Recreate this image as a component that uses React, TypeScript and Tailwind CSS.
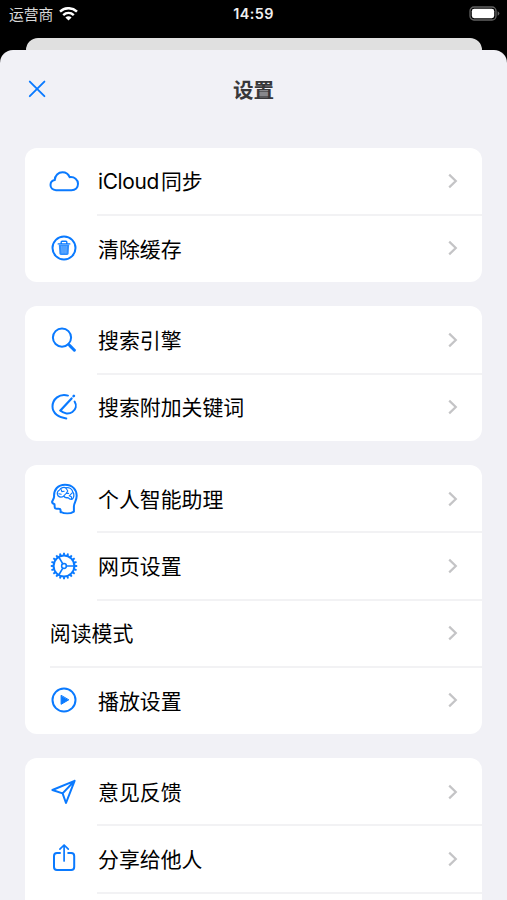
import React from 'react';
import clsx from 'clsx';

type IconName = 'cloud' | 'trash' | 'search' | 'keyword' | 'brain' | 'gear' | 'play' | 'send' | 'share';

interface SettingItem {
    label: React.ReactNode;
    icon?: IconName;
}

const groups: SettingItem[][] = [
    [
        { label: <><span className="mr-[2px] tracking-[-0.35px]">iCloud</span>同步</>, icon: 'cloud' },
        { label: '清除缓存', icon: 'trash' },
    ],
    [
        { label: '搜索引擎', icon: 'search' },
        { label: '搜索附加关键词', icon: 'keyword' },
    ],
    [
        { label: '个人智能助理', icon: 'brain' },
        { label: '网页设置', icon: 'gear' },
        { label: '阅读模式' },
        { label: '播放设置', icon: 'play' },
    ],
    [
        { label: '意见反馈', icon: 'send' },
        { label: '分享给他人', icon: 'share' },
        { label: '' },
    ],
];

const teeth = Array.from({ length: 20 }, (_, i) => i * 18);

const iconShapes: Record<IconName, React.ReactNode> = {
    cloud: (
        <path d="M10 27.2C6.5 27.2 4.5 24.8 4.5 22.1C4.5 19.4 6.2 17.6 8.7 17.1C8.9 12.5 12.3 9.3 16.5 9.3C19.8 9.3 22.4 11.1 23.6 14.2C28.4 13.6 32 16.6 32 20.8C32 24.6 29.3 27.2 25.5 27.2Z" />
    ),
    trash: (
        <>
            <circle cx="18" cy="18" r="11.5" />
            <path d="M12.2 13.9H23.8M15.2 13.6V12Q15.2 11.2 16 11.2H20Q20.8 11.2 20.8 12V13.6" strokeWidth="1.4" />
            <path d="M12.8 14.4H23.2L22.6 23.6Q22.5 25 21.2 25H14.8Q13.5 25 13.4 23.6Z" fill="#2e8eff" stroke="none" />
            <path d="M15.9 16.3L16.1 23M18 16.3V23M20.1 16.3L19.9 23" stroke="#8cc2ff" strokeWidth="0.8" />
        </>
    ),
    search: (
        <>
            <circle cx="16" cy="15.6" r="9.1" />
            <path d="M22.4 22.2L24 23.8" />
            <path d="M23.8 23.6L28.4 28.2" strokeWidth="3" />
        </>
    ),
    keyword: (
        <>
            <path d="M22 6.6C13.4 4.2 6.5 10 6.5 17.6C6.5 24.4 12.8 28.8 20.3 29.4" />
            <path d="M14.4 21.6C18 25 23 25.4 26.4 23C30 20.4 30.8 16.2 28.6 12.6" />
            <path d="M25.6 9.4L14.4 21.4" strokeWidth="2.2" />
            <path d="M27.6 7.2L27.9 6.9" strokeWidth="2.6" />
        </>
    ),
    brain: (
        <>
            <path d="M14.6 31.2V29.4Q14.6 27.8 12.8 27.8H10.6Q8.8 27.8 8.7 26L8.5 23.2Q5.8 22.4 6.1 20.8C6.4 19.4 8 17.6 8.1 15.6C7.6 8.4 12 3.7 19 3.7C26.2 3.7 30.7 8.4 30.7 14.8C30.7 19.8 28 21.4 27.9 25.4V30.6C24 33 18.4 32.8 14.6 30.8" />
            <path d="M12 14.8C10.4 12.6 11.6 9.6 13.6 9C14.8 6.6 18 5.9 19.8 6.8C23.4 6.2 26.2 8.2 26.8 11C28.6 13.2 28 16.6 26.2 18.2C24.6 18.6 23 17.8 22 16.6C20.2 17 18.6 16.4 17.8 15.2C15.8 16.4 13.4 16.2 12 14.8Z" strokeWidth="1.3" />
            <path d="M12.8 12.8L15.2 13.2M15.4 8.8L15.8 10.6L18.2 10.2M20 7.2L21.8 10L20.2 12.4L18 14.6M20.2 12.4H22.6M26.2 11.8L23.2 14.8L25.4 15.8L25.6 17.6" strokeWidth="1.1" />
        </>
    ),
    gear: (
        <>
            <circle cx="18" cy="18" r="10.4" />
            {teeth.map(a => <path key={a} d="M28.4 18H31.2" strokeWidth="1.9" strokeLinecap="butt" transform={`rotate(${a} 18 18)`} />)}
            <circle cx="18" cy="18" r="2.4" strokeWidth="1.5" />
            <path d="M20.4 18H28.4M16.8 15.9L12.8 9M16.8 20.1L12.8 27" strokeWidth="1.6" />
        </>
    ),
    play: (
        <>
            <circle cx="18" cy="18" r="11.5" />
            <path d="M15.1 13.7V22.3L22.5 18Z" fill="#0a7aff" strokeWidth="1" />
        </>
    ),
    send: (
        <path d="M28.6 6.8L6.4 16L16.6 19.4L20 29L28.6 6.8L16.6 19.4" />
    ),
    share: (
        <>
            <path d="M14 12H11Q8 12 8 15V26Q8 29 11 29H25.2Q28.2 29 28.2 26V15Q28.2 12 25.2 12H22.2" />
            <path d="M18.1 20V4.2M13.9 8.2L18.1 4L22.3 8.2" strokeWidth="1.7" />
        </>
    ),
};

const Icon: React.FC<{ name: IconName }> = ({ name }) => (
    <svg className="mr-[15.7px] size-9 shrink-0" viewBox="0 0 36 36" fill="none" stroke="#0a7aff" strokeWidth="2" strokeLinecap="round" strokeLinejoin="round">
        {iconShapes[name]}
    </svg>
);

const Row: React.FC<{ item: SettingItem; last: boolean }> = ({ item, last }) => (
    <div className="flex h-[67.2px] flex-col">
        <div className={clsx('flex flex-1 items-center pr-[24px]', item.icon ? 'pl-[21.5px]' : 'pl-[25px]')}>
            {item.icon && <Icon name={item.icon} />}
            <span className="flex-1 whitespace-nowrap pt-[2.6px] text-[20.9px] leading-[30px] text-black">{item.label}</span>
            <svg className="h-4 w-2.5 shrink-0" viewBox="0 0 10 16" fill="none" stroke="#c4c4c6" strokeWidth="2.2">
                <path d="M1.2 1.6L7.8 8L1.2 14.4" />
            </svg>
        </div>
        {!last && <div className={clsx('-mt-px h-px translate-y-[0.5px] bg-[#e6e6e9]', item.icon ? 'ml-[72px]' : 'ml-[25px]')} />}
    </div>
);

const StatusBar: React.FC = () => (
    <div className="flex h-[38px] shrink-0 items-start justify-between pl-[9px] pr-[7px] text-white">
        <div className="flex h-7 w-[120px] items-center">
            <span className="pt-[2px] text-[14.8px] text-[#d8d8d8]">运营商</span>
            <svg className="ml-[6px] h-[15px] w-[19px]" viewBox="0 0 19 15" fill="none" stroke="white" strokeWidth="2.5">
                <path d="M1 4.6C5.8 .1 13.2 .1 18 4.6" />
                <path d="M4.2 8.1C7.3 5.3 11.7 5.3 14.8 8.1" />
                <path d="M9.5 13.5L6.4 10.5C8.1 8.8 10.9 8.8 12.6 10.5Z" fill="white" stroke="none" />
            </svg>
        </div>
        <span className="h-7 text-[14.4px] font-semibold leading-[28px] tracking-[0.4px] text-[#f0f0f0]">14:59</span>
        <div className="flex h-[27px] w-[122px] items-center justify-end">
            <svg className="h-[15px] w-[31px]" viewBox="0 0 31 15">
                <rect x="1" y="1" width="26" height="13" rx="4" fill="none" stroke="#626262" strokeWidth="1.3" />
                <rect x="2.8" y="2.8" width="22.4" height="9.4" rx="2.4" fill="white" />
                <path d="M28.6 5.2Q30.4 6 30.4 7.5T28.6 9.8Z" fill="#626262" />
            </svg>
        </div>
    </div>
);

const App: React.FC = () => (
    <div className="flex h-[900px] w-[507px] flex-col overflow-hidden bg-black font-['Inter','Noto_Sans_CJK_SC',sans-serif]">
        <StatusBar />
        {/* Page behind the sheet */}
        <div className="mx-[25.5px] h-3 shrink-0 rounded-t-[12px] bg-[#e0e0e0]" />
        <div className="flex min-h-0 flex-1 flex-col overflow-hidden rounded-t-[13px] bg-[#f1f1f6]">
            <header className="grid h-[78px] shrink-0 grid-cols-3 items-center px-[28px]">
                <svg className="size-[18px]" viewBox="0 0 18 18" fill="none" stroke="#0a7aff" strokeWidth="1.9" strokeLinecap="round">
                    <path d="M1.8 1.6L16.4 16.2M16.4 1.6L1.8 16.2" />
                </svg>
                <h1 className="pt-1 text-center text-[20.6px] font-bold leading-[30px] text-[#38383a]">设置</h1>
            </header>
            <main className="mx-[24.8px] mt-[19.6px] flex flex-col gap-[24.4px]">
                {groups.map((group, g) => (
                    <section key={g} className="shrink-0 rounded-[12px] bg-white">
                        {group.map((item, i) => <Row key={i} item={item} last={i === group.length - 1} />)}
                    </section>
                ))}
            </main>
        </div>
    </div>
);

export default App;
